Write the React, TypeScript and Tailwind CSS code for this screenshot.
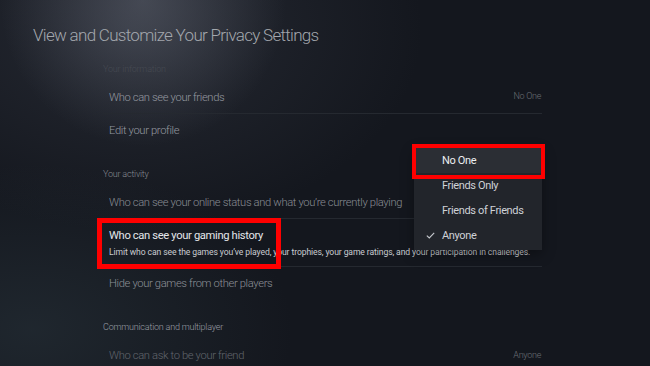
import React from 'react';

type Row = { label: string; value?: string; desc?: string; tone: string; line?: boolean; active?: boolean };

const sections: { title: string; tone: string; rows: Row[] }[] = [
  {
    title: 'Your information',
    tone: 'text-[#464a52]',
    rows: [
      { label: 'Who can see your friends', value: 'No One', tone: 'text-[#969aa1]', line: true },
      { label: 'Edit your profile', tone: 'text-[#969aa1]' },
    ],
  },
  {
    title: 'Your activity',
    tone: 'text-[#878b92]',
    rows: [
      { label: 'Who can see your online status and what you\u2019re currently playing', tone: 'text-[#8a8e95]', line: true },
      {
        label: 'Who can see your gaming history',
        desc: 'Limit who can see the games you\u2019ve played, your trophies, your game ratings, and your participation in challenges.',
        tone: 'text-[#e4e6ea]',
        line: true,
        active: true,
      },
      { label: 'Hide your games from other players', tone: 'text-[#8d9198]' },
    ],
  },
  {
    title: 'Communication and multiplayer',
    tone: 'text-[#9a9ea5]',
    rows: [{ label: 'Who can ask to be your friend', value: 'Anyone', tone: 'text-[#62666d]' }],
  },
];

const options = ['No One', 'Friends Only', 'Friends of Friends', 'Anyone'];

const SettingRow: React.FC<{ row: Row }> = ({ row }) => (
  <div
    className={`flex items-center justify-between pl-[6px] ${row.desc ? 'h-[48px]' : 'h-[33px]'} ${
      row.line ? 'border-b border-[#252930]' : ''
    }`}
  >
    <div className="flex flex-col pt-[1px]">
      <span
        className={`text-[11.2px] leading-[14px] tracking-[-0.35px] whitespace-nowrap ${row.tone} ${
          row.active ? 'font-normal' : 'font-light'
        }`}
      >
        {row.label}
      </span>
      {row.desc && (
        <span className="text-[8.6px] leading-[12px] mt-[3px] text-[#c9ccd1] whitespace-nowrap tracking-[-0.1px]">{row.desc}</span>
      )}
    </div>
    {row.value && <span className="text-[9px] text-[#6a6e75] font-light tracking-[-0.3px] pr-[1px]">{row.value}</span>}
  </div>
);

export default function App() {
  return (
    <div
      className="relative w-[650px] h-[366px] overflow-hidden bg-[#14171e] bg-[radial-gradient(ellipse_22%_40%_at_22%_0%,rgba(140,145,160,0.32),transparent_100%),radial-gradient(ellipse_45%_55%_at_20%_8%,rgba(70,75,88,0.35),transparent_100%),radial-gradient(ellipse_40%_45%_at_5%_90%,rgba(45,58,66,0.45),transparent_100%)]"
      style={{ fontFamily: 'Roboto, "Liberation Sans", sans-serif' }}
    >
      <div className="pl-[33px] pt-[24px] h-[59px]">
        <h1 className="text-[17px] leading-[22px] font-light text-[#a3a7ad] tracking-[-0.7px]">
          View and Customize Your Privacy Settings
        </h1>
      </div>

      <div className="ml-[103px] w-[439px]">
        {sections.map((s, i) => (
          <div key={s.title} className={i === 0 ? '' : 'mt-[17px]'}>
            <div className={`h-[22px] flex items-center text-[9px] font-light tracking-[-0.2px] ${s.tone}`}>{s.title}</div>
            {s.rows.map((r) => (
              <SettingRow key={r.label} row={r} />
            ))}
          </div>
        ))}
      </div>

      {/* dropdown menu */}
      <div className="absolute left-[414px] top-[148px] w-[128px] pb-[2px] bg-[#22252b] shadow-[0_4px_12px_rgba(0,0,0,0.35)]">
        {options.map((o, i) => (
          <div
            key={o}
            className={`relative h-[25px] flex items-center pl-[28px] pt-[1px] text-[11px] tracking-[-0.35px] ${
              i === 0 ? 'bg-[#2b2e34] text-[#eceef1]' : 'text-[#cfd2d7]'
            }`}
          >
            {o === 'Anyone' && (
              <svg className="absolute left-[12px] top-[9px]" width="9" height="7" viewBox="0 0 9 7" fill="none">
                <path d="M0.8 3.6 L3.3 6 L8.2 0.8" stroke="#c6c9ce" strokeWidth="1.1" />
              </svg>
            )}
            {o}
          </div>
        ))}
      </div>

      {/* annotation boxes */}
      <div className="absolute left-[412px] top-[144px] w-[133px] h-[35px] border-[4px] border-[#ff0000]" />
      <div className="absolute left-[97px] top-[218px] w-[184px] h-[51px] border-[5px] border-[#ff0000]" />
    </div>
  );
}
